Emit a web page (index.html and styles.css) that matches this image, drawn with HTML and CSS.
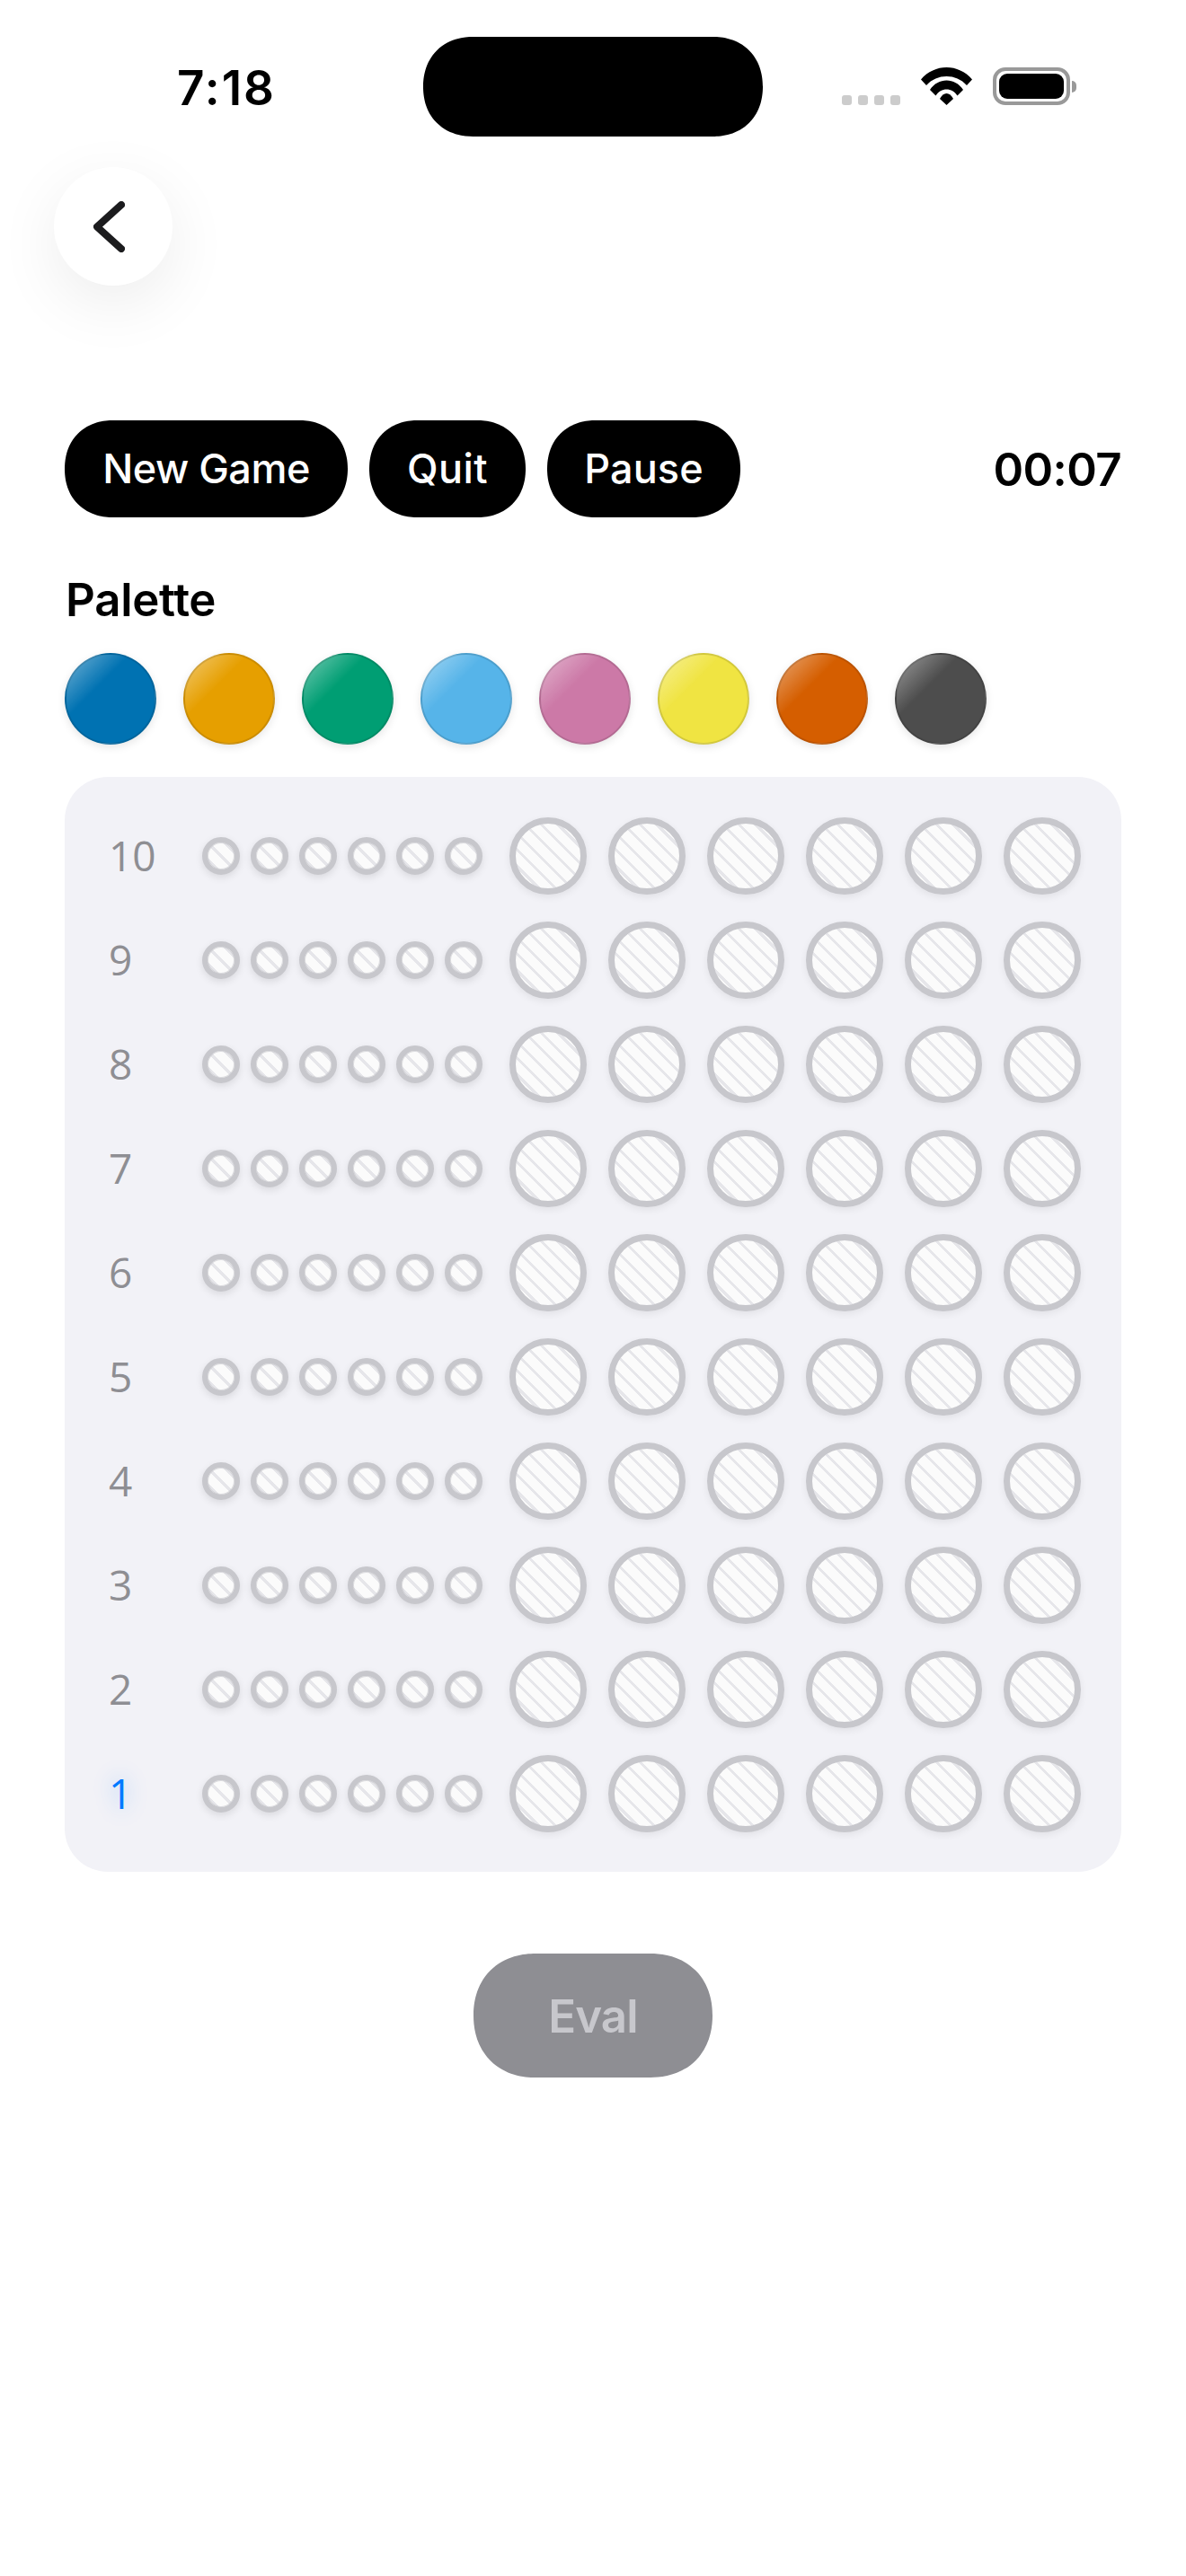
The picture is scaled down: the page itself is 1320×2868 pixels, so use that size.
FILE: index.html
```html
<!DOCTYPE html>
<html lang="en">
<head>
<meta charset="utf-8">
<title>Game</title>
<link rel="stylesheet" href="styles.css">
</head>
<body>
<div class="page">
  <header class="status">
    <div class="time">7:18</div>
    <div class="island"></div>
    <div class="status-right">
      <div class="signal"><i></i><i></i><i></i><i></i></div>
      <svg class="wifi" viewBox="0 0 57 42" width="57" height="42"><path d="M0 13.5C15-4.5 42-4.5 57 13.5L51 20C39 6.7 18 6.7 6 20Z"/><path d="M10 25C19 11 38 11 47 25L40.5 31.5C35 22 22 22 16.5 31.5Z"/><path d="M21 35C25 27 32 27 36 35L28.5 42Z"/></svg>
      <div class="battery"><div class="battery-fill"></div></div>
      <div class="battery-cap"></div>
    </div>
  </header>
  <div class="nav">
    <button class="back"><svg viewBox="0 0 35 57" width="35" height="57"><path d="M31 4 4 28.5 31 53"/></svg></button>
  </div>
  <section class="controls">
    <button class="pill pill-new">New Game</button>
    <button class="pill pill-quit">Quit</button>
    <button class="pill pill-pause">Pause</button>
    <div class="timer">00:07</div>
  </section>
  <h2 class="palette-title">Palette</h2>
  <div class="palette">
    <div class="marble blue"></div><div class="marble orange"></div><div class="marble green"></div><div class="marble sky"></div><div class="marble pink"></div><div class="marble yellow"></div><div class="marble red"></div><div class="marble gray"></div>
  </div>
  <section class="board">
    <div class="row"><span class="num">10</span><div class="hints"><i></i><i></i><i></i><i></i><i></i><i></i></div><div class="slots"><i></i><i></i><i></i><i></i><i></i><i></i></div></div>
    <div class="row"><span class="num">9</span><div class="hints"><i></i><i></i><i></i><i></i><i></i><i></i></div><div class="slots"><i></i><i></i><i></i><i></i><i></i><i></i></div></div>
    <div class="row"><span class="num">8</span><div class="hints"><i></i><i></i><i></i><i></i><i></i><i></i></div><div class="slots"><i></i><i></i><i></i><i></i><i></i><i></i></div></div>
    <div class="row"><span class="num">7</span><div class="hints"><i></i><i></i><i></i><i></i><i></i><i></i></div><div class="slots"><i></i><i></i><i></i><i></i><i></i><i></i></div></div>
    <div class="row"><span class="num">6</span><div class="hints"><i></i><i></i><i></i><i></i><i></i><i></i></div><div class="slots"><i></i><i></i><i></i><i></i><i></i><i></i></div></div>
    <div class="row"><span class="num">5</span><div class="hints"><i></i><i></i><i></i><i></i><i></i><i></i></div><div class="slots"><i></i><i></i><i></i><i></i><i></i><i></i></div></div>
    <div class="row"><span class="num">4</span><div class="hints"><i></i><i></i><i></i><i></i><i></i><i></i></div><div class="slots"><i></i><i></i><i></i><i></i><i></i><i></i></div></div>
    <div class="row"><span class="num">3</span><div class="hints"><i></i><i></i><i></i><i></i><i></i><i></i></div><div class="slots"><i></i><i></i><i></i><i></i><i></i><i></i></div></div>
    <div class="row"><span class="num">2</span><div class="hints"><i></i><i></i><i></i><i></i><i></i><i></i></div><div class="slots"><i></i><i></i><i></i><i></i><i></i><i></i></div></div>
    <div class="row"><span class="num active">1</span><div class="hints"><i></i><i></i><i></i><i></i><i></i><i></i></div><div class="slots"><i></i><i></i><i></i><i></i><i></i><i></i></div></div>
  </section>
  <div class="eval-wrap"><button class="eval">Eval</button></div>
</div>
</body>
</html>
```
FILE: styles.css
```css
* { box-sizing: border-box; }
html, body { margin: 0; padding: 0; background: #fff; }
body { font-family: Inter, "Liberation Sans", sans-serif; color: #000; }
button { font: inherit; border: 0; padding: 0; margin: 0; }
.page { width: 1320px; height: 2868px; overflow: hidden; }

.status { height: 186px; display: flex; align-items: flex-start; }
.time { width: 106px; margin: 68px 0 0 197px; font-size: 53px; line-height: 60px; font-weight: 600; letter-spacing: 2px; white-space: nowrap; }
.island { width: 378px; height: 111px; margin: 41px 0 0 168px; background: #000; border-radius: 55.5px; corner-shape: superellipse(1.12); }
.status-right { display: flex; align-items: flex-end; margin: 75px 0 0 88px; height: 42px; }
.signal { display: flex; gap: 7px; }
.signal i { width: 11px; height: 11px; border-radius: 3px; background: #ccc; }
.wifi { display: block; margin-left: 23px; fill: #000; }
.battery { width: 86px; height: 42px; margin-left: 23px; border: 4px solid #999; border-radius: 14px; padding: 3px; }
.battery-fill { width: 100%; height: 100%; background: #000; border-radius: 9px; }
.battery-cap { width: 5px; height: 13px; margin: 0 0 14px 2px; background: #999; border-radius: 0 5px 5px 0; }

.nav { height: 132px; padding-left: 60px; }
.back { width: 132px; height: 132px; border-radius: 50%; background: #fff; box-shadow: 0 20px 70px rgba(0,0,0,.075); display: flex; align-items: center; justify-content: center; }
.back svg { display: block; margin: 0 10px 0 0; fill: none; stroke: #1c1c1e; stroke-width: 8; stroke-linecap: round; stroke-linejoin: round; }

.controls { margin-top: 150px; padding: 0 72px; display: flex; align-items: center; gap: 24px; height: 108px; }
.pill { height: 108px; padding: 0 0 2px; border-radius: 54px; corner-shape: superellipse(1.12); background: #000; color: #fff; font-size: 45px; font-weight: 550; white-space: nowrap; }
.pill-new { width: 315px; letter-spacing: -.5px; }
.pill-quit { width: 174px; letter-spacing: .4px; }
.pill-pause { width: 215px; letter-spacing: .1px; }
.timer { margin-left: auto; font-size: 51px; font-weight: 600; letter-spacing: -.6px; }

.palette-title { margin: 62px 0 0 73px; font-size: 51px; line-height: 60px; font-weight: 600; letter-spacing: -.3px; }
.palette { margin: 29px 0 0 72px; display: flex; gap: 30px; }
.marble { width: 102px; height: 102px; border-radius: 50%; border: 2px solid rgba(0,0,0,.12); box-shadow: 0 3px 10px rgba(0,0,0,.1); background-image: linear-gradient(135deg, rgba(255,255,255,.28) 14%, rgba(255,255,255,0) 36%); }
.blue { background-color: #0072b2; }
.orange { background-color: #e69f00; }
.green { background-color: #009e73; }
.sky { background-color: #56b4e9; }
.pink { background-color: #cc79a7; }
.yellow { background-color: #f0e442; }
.red { background-color: #d55e00; }
.gray { background-color: #4d4d4d; }

.board { margin: 36px 0 0 72px; width: 1176px; padding: 45px 45px 44px 49px; background: #f2f2f7; border-radius: 48px; display: flex; flex-direction: column; gap: 30px; }
.row { display: flex; align-items: center; height: 86px; }
.num { width: 104px; padding-bottom: 3px; font-family: "Open Sans", sans-serif; font-size: 46px; color: #8e8e93; font-weight: 400; }
.num.active { color: #007aff; text-shadow: 0 0 24px rgba(0,122,255,.45); }
.hints { display: flex; gap: 12px; }
.slots { display: flex; gap: 24px; margin-left: 30px; }
.hints i, .slots i { display: block; border-radius: 50%; border: 6px solid #c7c7cc; box-shadow: 0 3px 9px rgba(0,0,0,.07); background-color: #fbfbfb; background-origin: padding-box; }
.hints i { width: 42px; height: 42px; box-shadow: 0 3px 9px rgba(0,0,0,.1), inset 0 0 0 1px rgba(199,199,204,.6); background-image: repeating-linear-gradient(45deg, #fbfbfb 0 6.7px, #e6e6ea 6.7px 9.7px, #fbfbfb 9.7px 13px); }
.slots i { width: 86px; height: 86px; border-width: 7px; background-image: repeating-linear-gradient(45deg, #fbfbfb 0 3.9px, #e6e6ea 3.9px 6.9px, #fbfbfb 6.9px 13px); }

.eval-wrap { margin-top: 91px; display: flex; justify-content: center; }
.eval { width: 266px; height: 138px; border-radius: 69px; corner-shape: superellipse(1.12); background: #8e8e93; color: #c7c7cc; font-size: 51px; font-weight: 600; letter-spacing: -.9px; }
```
